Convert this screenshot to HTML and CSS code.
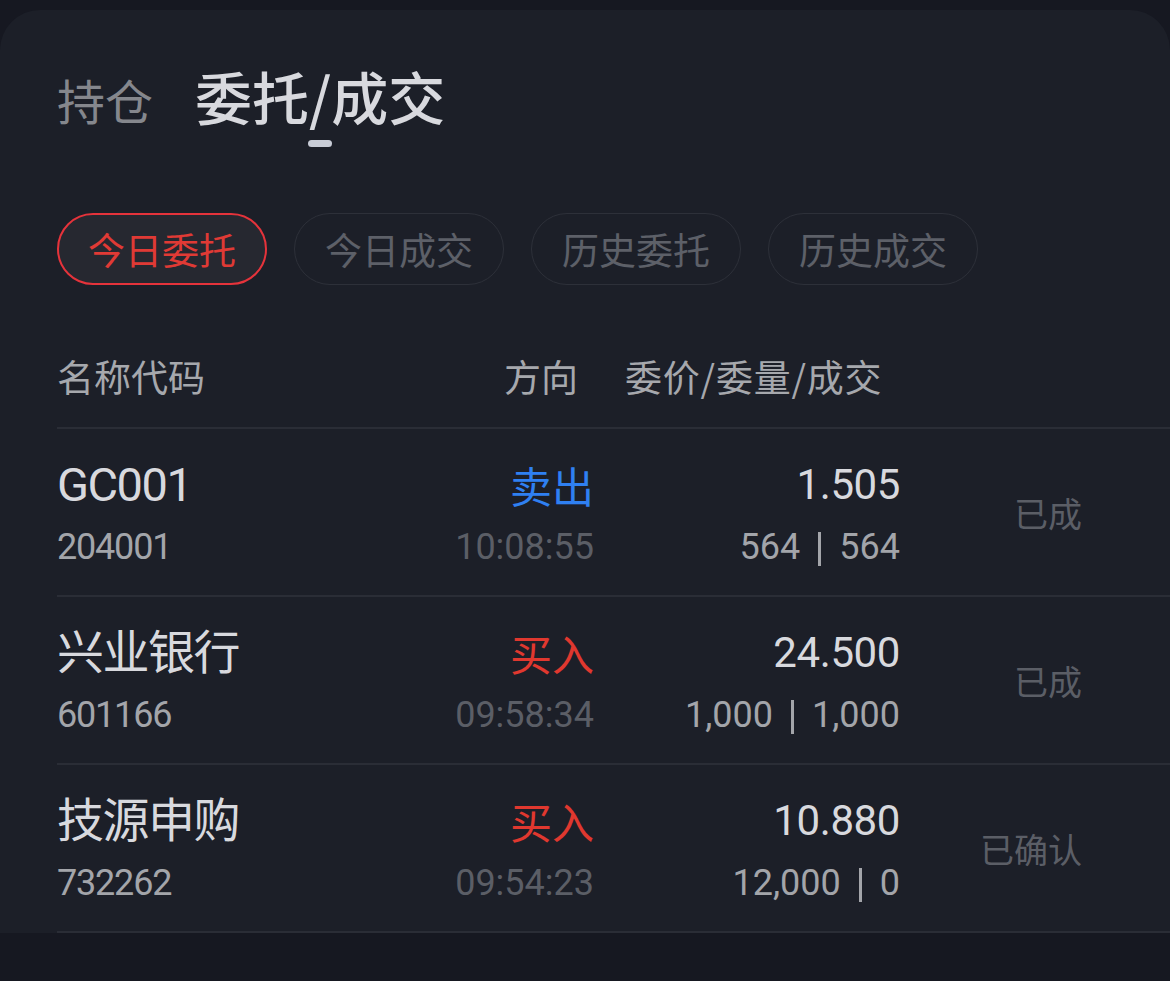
FILE: index.html
```html
<!DOCTYPE html>
<html lang="zh-CN">
<head>
<meta charset="utf-8">
<title>委托/成交</title>
<link rel="stylesheet" href="styles.css">
</head>
<body>
<div class="page">
  <section class="card">
    <nav class="tabs">
      <span class="tab">持仓</span>
      <span class="tab tab-active">委托/成交</span>
    </nav>
    <div class="pills">
      <span class="pill pill-active">今日委托</span>
      <span class="pill">今日成交</span>
      <span class="pill">历史委托</span>
      <span class="pill">历史成交</span>
    </div>
    <div class="thead">
      <span class="th th-name">名称代码</span>
      <span class="th th-dir">方向</span>
      <span class="th th-price">委价/委量/成交</span>
    </div>
    <div class="rows">
      <div class="row">
        <div class="cell c-name"><span class="l1 name">GC001</span><span class="l2 code">204001</span></div>
        <div class="cell c-dir"><span class="l1 dir sell">卖出</span><span class="l2 time">10:08:55</span></div>
        <div class="cell c-price"><span class="l1 price">1.505</span><span class="l2 qty">564<i class="bar"></i>564</span></div>
        <div class="cell c-status">已成</div>
      </div>
      <div class="row">
        <div class="cell c-name"><span class="l1 name">兴业银行</span><span class="l2 code">601166</span></div>
        <div class="cell c-dir"><span class="l1 dir buy">买入</span><span class="l2 time">09:58:34</span></div>
        <div class="cell c-price"><span class="l1 price">24.500</span><span class="l2 qty">1,000<i class="bar"></i>1,000</span></div>
        <div class="cell c-status">已成</div>
      </div>
      <div class="row">
        <div class="cell c-name"><span class="l1 name">技源申购</span><span class="l2 code">732262</span></div>
        <div class="cell c-dir"><span class="l1 dir buy">买入</span><span class="l2 time">09:54:23</span></div>
        <div class="cell c-price"><span class="l1 price">10.880</span><span class="l2 qty">12,000<i class="bar"></i>0</span></div>
        <div class="cell c-status">已确认</div>
      </div>
    </div>
  </section>
</div>
</body>
</html>
```
FILE: styles.css
```css
* { box-sizing: border-box; }
html, body {
  margin: 0;
  padding: 0;
  background: #161821;
}
body {
  font-family: Roboto, "Noto Sans CJK SC", sans-serif;
  color: #d6d7dc;
}
.page {
  width: 1170px;
  height: 981px;
  padding-top: 10px;
}
.card {
  background: #1c1f28;
  border-radius: 40px 40px 0 0;
  padding-left: 57px;
}
.tabs {
  display: flex;
  align-items: baseline;
  gap: 42px;
  height: 203px;
  padding-top: 50px;
  font-family: "Noto Sans CJK SC", sans-serif;
}
.tab {
  font-size: 48px;
  line-height: 70px;
  color: #85878d;
}
.tab-active {
  position: relative;
  font-size: 57px;
  color: #d8d9de;
  font-weight: 500;
}
.tab-active::after {
  content: "";
  position: absolute;
  left: 50%;
  margin-left: -12px;
  bottom: -17px;
  width: 24px;
  height: 7px;
  border-radius: 4px;
  background: #c8ccd6;
}
.pills {
  display: flex;
  gap: 27px;
}
.pill {
  width: 210px;
  height: 72px;
  border-radius: 36px;
  border: 1.5px solid #2d3039;
  display: flex;
  align-items: center;
  justify-content: center;
  font-family: "Noto Sans CJK SC", sans-serif;
  font-size: 37px;
  color: #5d6068;
}
.pill-active {
  border: 2px solid #e5333b;
  background: #262830;
  color: #e03a35;
}
.thead {
  display: flex;
  align-items: center;
  height: 144px;
  padding-top: 40px;
  border-bottom: 2px solid #2a2d36;
  font-family: "Noto Sans CJK SC", sans-serif;
  font-size: 37px;
  color: #a6a8ad;
}
.th-name { width: 447px; }
.th-dir { width: 74px; text-align: right; }
.th-price { margin-left: 47px; letter-spacing: 0.8px; }
.row {
  display: grid;
  grid-template-columns: 320px 217px 306px 182px;
  height: 168px;
  border-bottom: 2px solid #2a2d36;
  align-items: center;
}
.cell {
  display: flex;
  flex-direction: column;
  padding-top: 8px;
}
.c-dir, .c-price { align-items: flex-end; }
.l1 {
  line-height: 62px;
  height: 62px;
}
.l2 {
  line-height: 62px;
  height: 62px;
}
.name {
  font-size: 47px;
  color: #d8d9de;
  letter-spacing: -1.5px;
}
.code {
  font-size: 36px;
  color: #a3a5aa;
  letter-spacing: -1.2px;
}
.dir {
  font-family: "Noto Sans CJK SC", sans-serif;
  font-size: 42px;
}
.sell { color: #2f80f2; }
.buy { color: #e0382f; }
.time {
  font-size: 36px;
  color: #5b5e66;
  letter-spacing: 0;
}
.price {
  font-size: 42px;
  color: #d8d9de;
  letter-spacing: -0.4px;
}
.qty {
  display: flex;
  align-items: center;
  font-size: 36px;
  color: #a3a5aa;
  letter-spacing: 0;
}
.bar {
  display: inline-block;
  width: 3px;
  height: 34px;
  margin: 4px 18px 0 18px;
  background: #a3a5aa;
}
.c-status {
  text-align: right;
  font-family: "Noto Sans CJK SC", sans-serif;
  font-size: 34px;
  color: #5b5e66;
  padding-top: 0;
}
```
